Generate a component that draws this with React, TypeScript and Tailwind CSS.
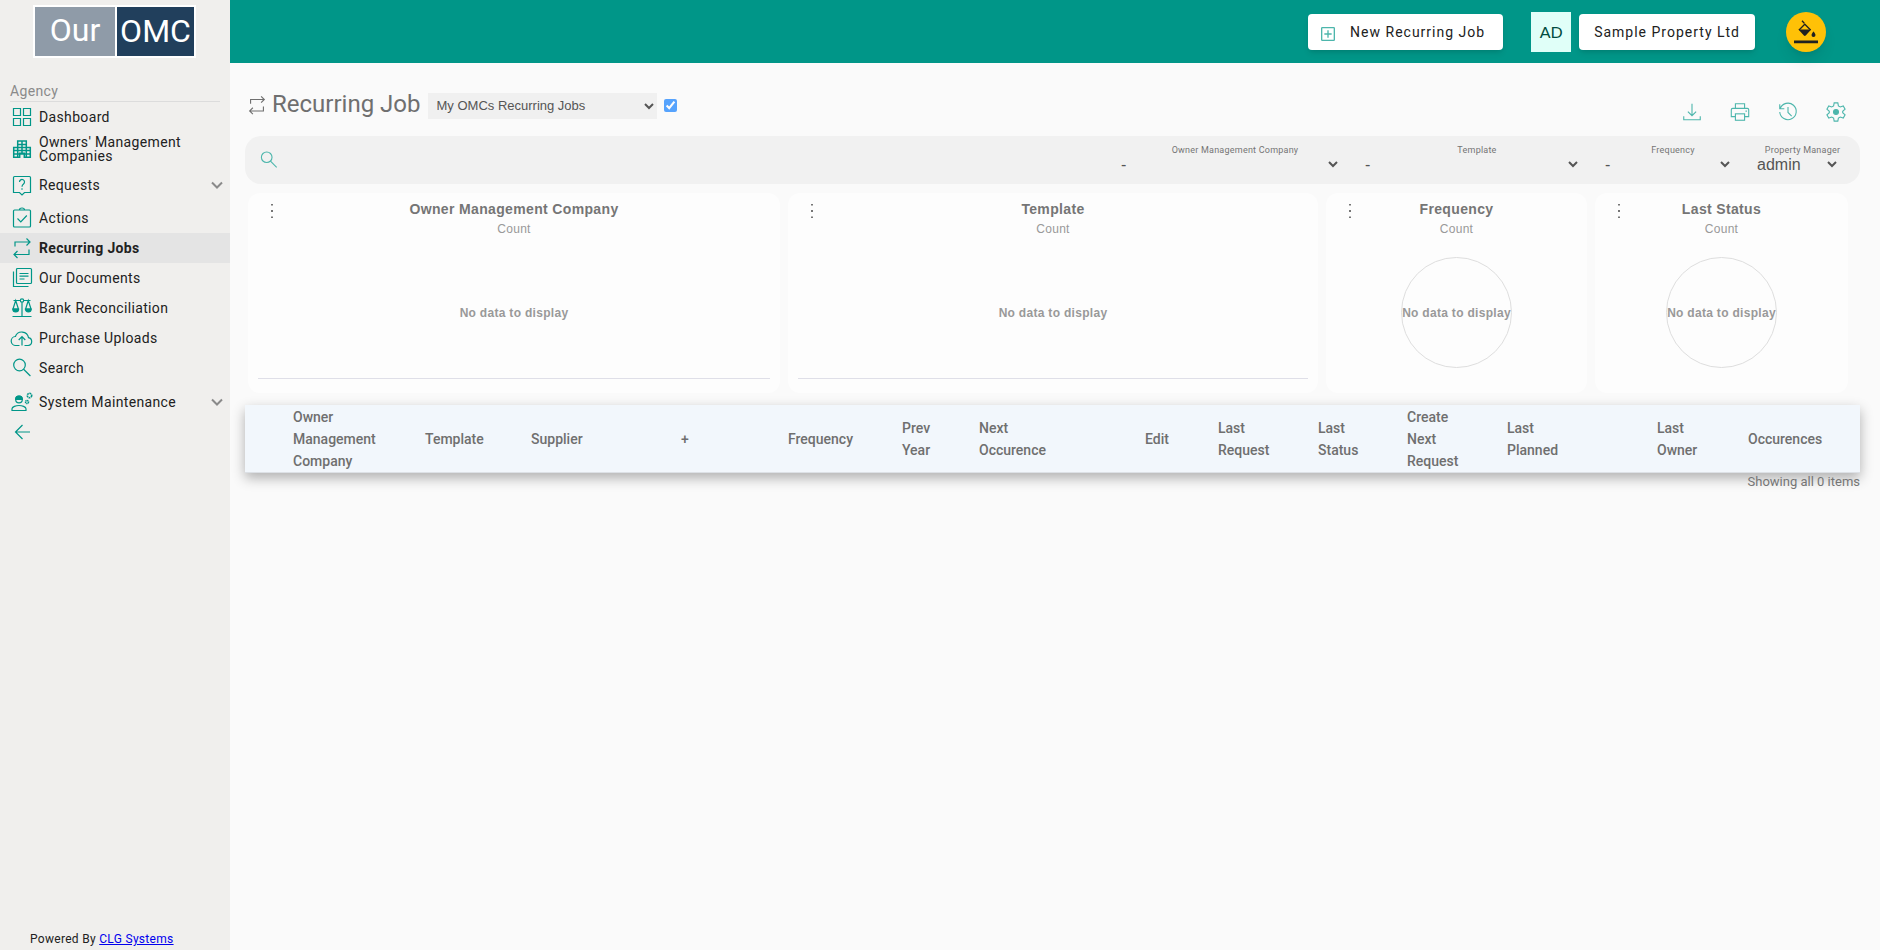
import React from 'react';

interface IconProps {
  className?: string;
  children: React.ReactNode;
}

const Icon: React.FC<IconProps> = ({ className = 'size-6', children }) => (
  <svg
    className={`${className} shrink-0`}
    viewBox="0 0 24 24"
    fill="none"
    stroke="currentColor"
    strokeWidth="1.2"
    aria-hidden="true"
  >
    {children}
  </svg>
);

const RepeatPaths = () => (
  <path d="M5 10.500V6h14.500M16.500 2.500L20 6l-3.500 3.500M19 13.500v5H4.500M7.500 15L4 18.500 7.500 22" />
);

const SearchPaths = () => (
  <>
    <circle cx="9.500" cy="9" r="5.800" />
    <path d="M13.600 13.300l6.800 6.700" />
  </>
);

interface NavItem {
  label: string;
  icon: React.ReactNode;
  row?: string;
  active?: boolean;
  expandable?: boolean;
}

const navItems: NavItem[] = [
  {
    label: 'Dashboard',
    icon: <path d="M3.500 3.500h7v7h-7zM13.500 3.500h7v7h-7zM3.500 13.500h7v7h-7zM13.500 13.500h7v7h-7z" />,
  },
  {
    label: "Owners' Management Companies",
    row: 'h-[34px]',
    icon: (
      <path
        strokeWidth="1.500"
        d="M3.700 20.300V10.500h4V4h8.600v6.500h4v9.800h-6v-4h-4.600v4zM7.700 10.500v9.800M12 4v12.300M16.300 10.500v9.800M7.700 7.500h8.600M7.700 10.500h8.600M3.700 13.500h16.600M3.700 17h16.600"
      />
    ),
  },
  {
    label: 'Requests',
    row: 'h-[37px]',
    expandable: true,
    icon: (
      <>
        <path d="M4.500 3.500h15a1 1 0 0 1 1 1v15h-6L12 22l-2.500-2.500h-6v-15a1 1 0 0 1 1-1z" />
        <path d="M9.500 9a2.500 2.500 0 1 1 4 2c-1 .8-1.500 1.300-1.500 2.700M12 15.300v1.400" />
      </>
    ),
  },
  {
    label: 'Actions',
    icon: (
      <>
        <rect x="3.500" y="4" width="17" height="17" rx="1" />
        <path d="M9.500 4a2.500 2 0 0 1 5 0M7.500 12.500l3.300 3.300 6-6.300" />
      </>
    ),
  },
  { label: 'Recurring Jobs', active: true, icon: <RepeatPaths /> },
  {
    label: 'Our Documents',
    icon: (
      <>
        <rect x="6.500" y="2.500" width="15" height="15" rx="1" />
        <path d="M3.500 5.500v15h15M9.500 7.500h9M9.500 10.200h9M9.500 13h5" />
      </>
    ),
  },
  {
    label: 'Bank Reconciliation',
    icon: (
      <>
        <circle cx="12" cy="4.500" r="1.700" />
        <path d="M3.500 4.500h6.800M13.700 4.500h6.800M12 6.200v14.300M2.500 20.500h19M5.700 4.500L3 13h5.400zM18.300 4.500L15.600 13H21z" />
        <path d="M2.800 13a2.900 2.900 0 0 0 5.800 0zM15.400 13a2.900 2.900 0 0 0 5.800 0z" fill="currentColor" />
      </>
    ),
  },
  {
    label: 'Purchase Uploads',
    icon: (
      <path d="M9.500 19.500H6a4.500 4.500 0 0 1-.6-9 6.800 6.800 0 0 1 13.100 1.200 3.950 3.950 0 0 1-.3 7.800h-3.700M12 19.500v-8.500M8.700 14l3.300-3.300 3.300 3.300" />
    ),
  },
  { label: 'Search', icon: <SearchPaths /> },
  {
    label: 'System Maintenance',
    row: 'h-[38px]',
    expandable: true,
    icon: (
      <>
        <path d="M2 20.500v-1.700c0-2 4-3.300 7-3.300s7 1.300 7 3.300v1.700z" />
        <circle cx="9" cy="9.500" r="3.300" />
        <path d="M5.700 9.300a3.300 3.300 0 0 1 6.600 0z" fill="currentColor" />
        <circle cx="19.500" cy="5.500" r="2.200" strokeWidth="1.600" strokeDasharray="1.700 .6" />
        <circle cx="17" cy="12" r="1.500" strokeWidth="1.500" strokeDasharray="1.200 .4" />
      </>
    ),
  },
];

const Logo = () => (
  <div className="ml-[33px] mt-[5px] flex h-[53px] w-[163px] gap-[2px] border-2 border-white bg-white text-[32px] leading-none text-white">
    <span className="flex flex-1 items-center justify-center bg-[#8f9ba8] pb-1">Our</span>
    <span className="flex w-[77px] items-center justify-center bg-[#213f5c] pb-0.5">OMC</span>
  </div>
);

const Sidebar = () => (
  <aside className="flex w-[230px] shrink-0 flex-col bg-[#f0efed] text-[#212121]">
    <Logo />
    <h2 className="mx-[10px] mt-[24px] h-5 border-b border-[#dcdcdc] text-sm leading-[18px] tracking-wide text-[#8a8a8a]">
      Agency
    </h2>
    <nav>
      {navItems.map((item) => (
        <a
          key={item.label}
          href="#"
          className={`flex items-center pl-[10px] pr-[7px] text-sm leading-[14px] tracking-wide ${item.row ?? 'h-[30px]'} ${
            item.active ? 'bg-[#e4e4e4] font-bold' : ''
          }`}
        >
          <span className="text-[#009688]">
            <Icon>{item.icon}</Icon>
          </span>
          <span className="ml-[5px] flex-1">{item.label}</span>
          {item.expandable && (
            <span className="text-[#8a8a8a]">
              <Icon className="size-3">
                <path strokeWidth="4" d="M2 7l10 10L22 7" />
              </Icon>
            </span>
          )}
        </a>
      ))}
      <button type="button" aria-label="Collapse menu" className="ml-[10px] flex h-[22px] items-center text-[#009688]">
        <Icon>
          <path d="M20 12H5.500M12.500 5l-7 7 7 7" />
        </Icon>
      </button>
    </nav>
    <p className="mt-auto pb-px pl-[30px] text-xs leading-5 tracking-wide">
      Powered By{' '}
      <a href="#" className="text-[#0000ee] underline">
        CLG Systems
      </a>
    </p>
  </aside>
);

const Header = () => (
  <header className="flex h-[63px] items-center justify-end bg-[#009688] pr-[54px] text-[#212121]">
    <button
      type="button"
      className="mr-7 flex h-9 items-center rounded bg-white pl-3 pr-[18px] text-sm tracking-[1px] shadow-md"
    >
      <span className="mr-[14px] pt-1 text-[#4db6ac]">
        <Icon className="size-4">
          <rect x="2.500" y="2.500" width="19" height="19" rx="1" strokeWidth="2" />
          <path strokeWidth="2" d="M12 6.500v11M6.500 12h11" />
        </Icon>
      </span>
      New Recurring Job
    </button>
    <span className="mr-2 flex size-10 items-center justify-center bg-[#e0fff8] font-[Lato,sans-serif] text-base text-[#004d40]">
      AD
    </span>
    <button type="button" className="mr-[31px] h-9 rounded bg-white px-[15px] text-sm tracking-[1px] shadow-md">
      Sample Property Ltd
    </button>
    <button
      type="button"
      aria-label="Change theme colour"
      className="flex size-10 items-center justify-center rounded-full bg-[#ffc107] text-[#212121] shadow-lg"
    >
      <svg viewBox="0 0 24 24" className="size-6" aria-hidden="true">
        <path d="M8 .8l2.300 2.400M5 10l5.800-5.800L16.600 10" fill="none" stroke="currentColor" strokeWidth="1.300" />
        <path
          d="M4.400 9.500h12.800l-5.500 6a1.300 1.300 0 0 1-1.800 0zM19.500 11.500s-2 2.170-2 3.500a2 2 0 0 0 4 0c0-1.330-2-3.500-2-3.500zM0 20.500h24v2.800H0z"
          fill="currentColor"
        />
      </svg>
    </button>
  </header>
);

const actions = [
  { label: 'Download', icon: <path d="M12 3v13M7.500 11.500L12 16l4.500-4.500M3 16.500v4h18v-4" /> },
  {
    label: 'Print',
    icon: (
      <>
        <path d="M7 8V3h10v5M7 17H2.500V9.500a1.500 1.500 0 0 1 1.500-1.500h16a1.500 1.500 0 0 1 1.500 1.500V17H17" />
        <rect x="7" y="14" width="10" height="7" />
        <path d="M18 11h1.500" />
      </>
    ),
  },
  { label: 'History', icon: <path d="M3 3.500v5h5M3.500 8.300A9 9 0 1 1 3 12M12 6.500v6l4 4" /> },
  {
    label: 'Settings',
    icon: (
      <>
        <path d="M10 2h4l.6 3.300 2.100 1.200 3.200-1.100 2 3.500-2.600 2.300v1.600l2.600 2.300-2 3.500-3.200-1.100-2.100 1.200-.6 3.300h-4l-.6-3.300-2.100-1.200-3.200 1.100-2-3.500 2.600-2.300v-1.600L2.100 8.900l2-3.500 3.200 1.100 2.100-1.200z" />
        <circle cx="12" cy="12" r="2.700" fill="currentColor" />
      </>
    ),
  },
];

const TitleBar = () => (
  <div className="flex h-[73px] items-center pr-3 pt-[10px] text-[#6f6f6f]">
    <Icon className="ml-[1px] size-[22px]">
      <RepeatPaths />
    </Icon>
    <h1 className="ml-1 pb-0.5 text-2xl leading-7">Recurring Job</h1>
    <select
      aria-label="View"
      className="ml-[7px] mt-0.5 h-[26px] w-[229px] bg-[#f0f0f0] pl-[5px] font-['Liberation_Sans',sans-serif] text-[13px] text-[#555]"
    >
      <option>My OMCs Recurring Jobs</option>
    </select>
    <input type="checkbox" aria-label="Use this view" defaultChecked className="ml-[7px] mt-0.5 size-[13px] opacity-65" />
    <div className="ml-auto flex gap-6 pt-[14px] text-[#4db6ac]">
      {actions.map((action) => (
        <button key={action.label} type="button" aria-label={action.label} className="flex size-6 items-center justify-center">
          <Icon className="size-[22px]">{action.icon}</Icon>
        </button>
      ))}
    </div>
  </div>
);

const filters = [
  { id: 'company', label: 'Owner Management Company', value: '-', width: 'w-[236px]', select: 'w-[224px]' },
  { id: 'template', label: 'Template', value: '-', width: 'w-[232px]', select: 'w-[220px]' },
  { id: 'frequency', label: 'Frequency', value: '-', width: 'w-[144px]', select: 'w-[132px]' },
  { id: 'manager', label: 'Property Manager', value: 'admin', width: 'w-[99px]', select: 'w-[87px]' },
];

const FilterBar = () => (
  <div className="flex h-12 items-center rounded-2xl bg-[#f1f1f1] pl-[13px] pr-2">
    <button type="button" aria-label="Search" className="text-[#4db6ac]">
      <Icon className="size-[22px]">
        <SearchPaths />
      </Icon>
    </button>
    <input type="text" aria-label="Search recurring jobs" className="mx-2 h-9 min-w-0 flex-1 bg-transparent outline-none" />
    <div className="flex gap-2 pb-0.5">
      {filters.map((filter) => (
        <div key={filter.id} className={`${filter.width} flex flex-col`}>
          <label
            htmlFor={filter.id}
            className="whitespace-nowrap text-center text-[9px] leading-[10px] tracking-wide text-[#757575]"
          >
            {filter.label}
          </label>
          <select
            id={filter.id}
            className={`${filter.select} h-[18px] font-['Liberation_Sans',sans-serif] text-base leading-[18px] text-[#555]`}
          >
            <option>{filter.value}</option>
          </select>
        </div>
      ))}
    </div>
  </div>
);

const charts = [
  { title: 'Owner Management Company', pie: false },
  { title: 'Template', pie: false },
  { title: 'Frequency', pie: true },
  { title: 'Last Status', pie: true },
];

const Charts = () => (
  <div className="ml-[3px] mr-3 mt-[9px] grid grid-cols-[532fr_530fr_261fr_253fr] gap-2 font-['Liberation_Sans',sans-serif]">
    {charts.map((chart) => (
      <section key={chart.title} className="relative flex h-[200px] flex-col items-center rounded-xl bg-[#fdfdfd] px-[10px] pt-2">
        <button type="button" aria-label={`${chart.title} menu`} className="absolute left-[18px] top-2 text-[#757575]">
          <svg viewBox="0 0 12 20" className="h-5 w-3" fill="currentColor" aria-hidden="true">
            <path d="M5 3h2v1.500H5zM5 9h2v2H5zM5 15.500h2V17H5z" />
          </svg>
        </button>
        <h3 className="text-sm font-bold leading-4 tracking-wide text-[#757575]">{chart.title}</h3>
        <p className="mt-1 text-xs leading-4 tracking-wide text-[#999]">Count</p>
        <div
          className={`flex items-center justify-center whitespace-nowrap text-xs font-bold tracking-wide text-[#999] ${
            chart.pie
              ? 'mt-5 size-[111px] rounded-full border border-[#dedede]'
              : 'mt-[10px] h-[132px] w-full border-b border-[#dfdfe8]'
          }`}
        >
          No data to display
        </div>
      </section>
    ))}
  </div>
);

const columns = [
  { label: '', width: 'w-[24px]' },
  { label: 'Owner Management Company', width: 'w-[132px]' },
  { label: 'Template', width: 'w-[106px]' },
  { label: 'Supplier', width: 'w-[150px]' },
  { label: '+', width: 'w-[107px]' },
  { label: 'Frequency', width: 'w-[114px]' },
  { label: 'Prev Year', width: 'w-[77px]' },
  { label: 'Next Occurence', width: 'w-[116px]' },
  { label: '', width: 'w-[50px]' },
  { label: 'Edit', width: 'w-[73px]' },
  { label: 'Last Request', width: 'w-[100px]' },
  { label: 'Last Status', width: 'w-[89px]' },
  { label: 'Create Next Request', width: 'w-[100px]' },
  { label: 'Last Planned', width: 'w-[100px]' },
  { label: '', width: 'w-[50px]' },
  { label: 'Last Owner', width: 'w-[91px]' },
  { label: 'Occurences', width: 'w-[136px]' },
];

const JobsTable = () => (
  <table className="mt-3 w-full table-fixed bg-[#f2f7fc] shadow-[0_5px_12px_rgba(0,0,0,0.3)]">
    <thead>
      <tr className="border-b border-[#dde1e6]">
        {columns.map((column, index) => (
          <th
            key={index}
            scope="col"
            className={`${column.width} pt-px text-left align-middle text-sm font-medium leading-[22px] text-[#6f6f6f] ${
              column.label ? 'pl-6 pr-5' : ''
            }`}
          >
            {column.label}
          </th>
        ))}
      </tr>
    </thead>
  </table>
);

export default function App() {
  return (
    <div className="flex min-h-screen bg-[#fafafa] font-[Roboto,sans-serif]">
      <Sidebar />
      <div className="flex min-w-0 flex-1 flex-col">
        <Header />
        <main className="pl-[15px] pr-5">
          <TitleBar />
          <FilterBar />
          <Charts />
          <JobsTable />
          <p className="relative text-right text-[13px] leading-[18px] text-[#757575]">Showing all 0 items</p>
        </main>
      </div>
    </div>
  );
}
